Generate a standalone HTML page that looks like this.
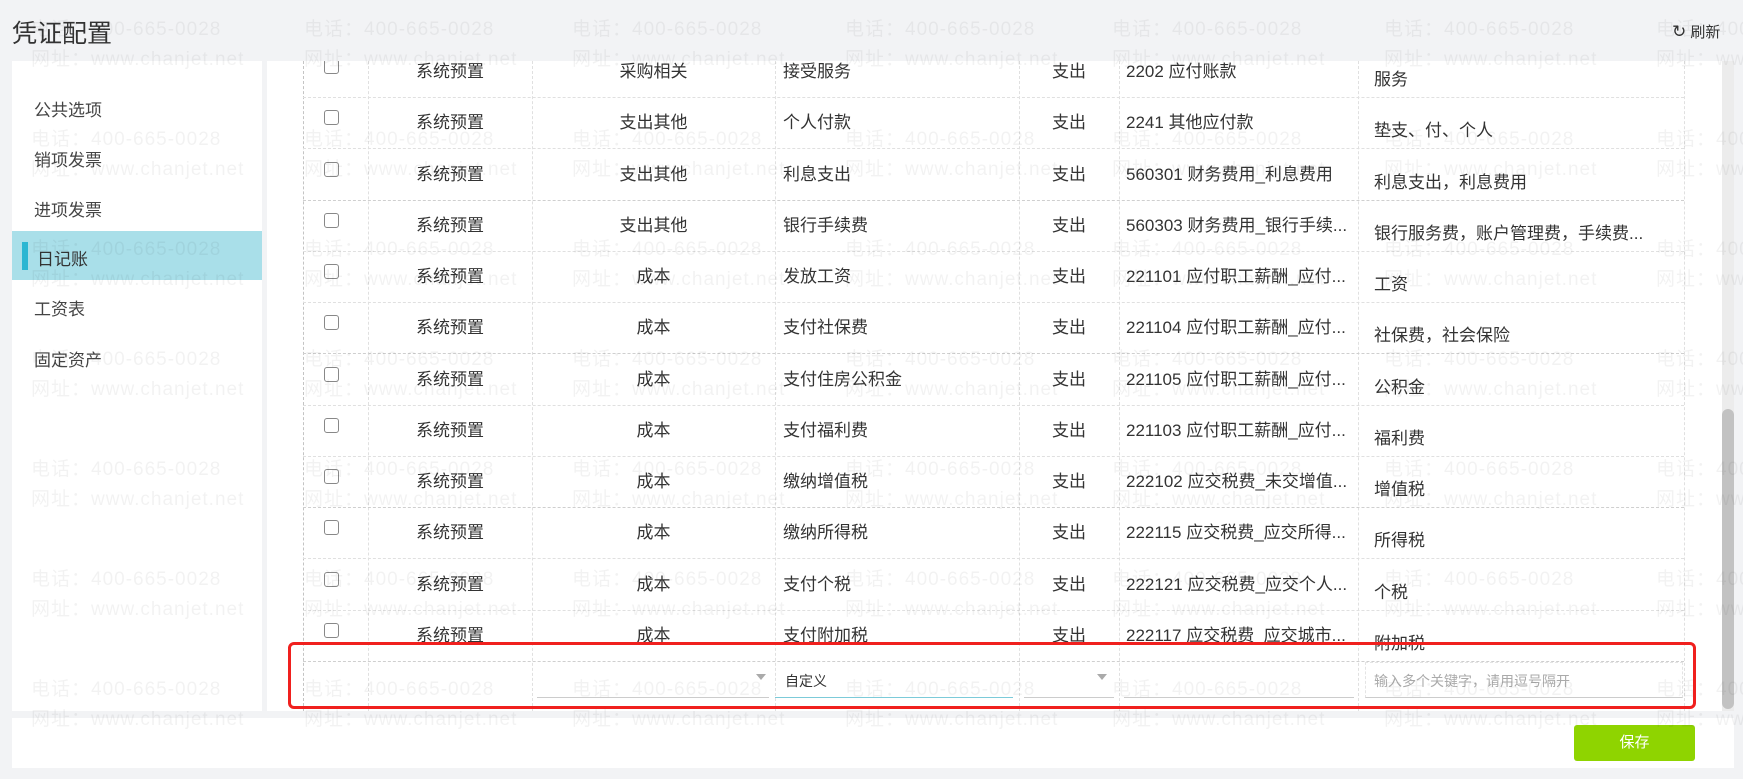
<!DOCTYPE html>
<html><head><meta charset="utf-8"><style>
*{margin:0;padding:0;box-sizing:border-box}
body{width:1743px;height:779px;background:#f2f3f5;position:relative;overflow:hidden;font-family:"Liberation Sans","Noto Sans CJK SC",sans-serif;color:#333}
.abs{position:absolute}
.title{left:12px;top:14px;font-size:25px;color:#333}
.refresh{left:1672px;top:21px;font-size:15px;color:#333}
.side{left:12px;top:61px;width:250px;height:650px;background:#fff}
.side div{position:absolute;left:22px;font-size:17px;color:#444}
.active{left:12px;top:231px;width:250px;height:49px;background:#a9dfe9}
.bar{left:22px;top:242px;width:6px;height:28px;background:#2bb6d2}
.main{left:267px;top:61px;width:1455px;height:650px;background:#fff;overflow:hidden}
.scroll{left:1722px;top:61px;width:12px;height:650px;background:#ececec}
.thumb{left:1722px;top:409px;width:12px;height:300px;background:#c2c2c2;border-radius:6px}
.vl{position:absolute;width:0;border-left:1px dashed #e0e0e0}
.hl{position:absolute;height:0;border-top:1px dashed #e0e0e0}
.cell{position:absolute;font-size:17px;white-space:nowrap}
.cb{position:absolute;width:15px;height:15px;border:1px solid #888;border-radius:3px;background:#fff}
.bottom{left:12px;top:718px;width:1722px;height:50px;background:#fff}
.save{left:1574px;top:725px;width:121px;height:36px;background:#8fd400;border-radius:3px;color:#fff;font-size:15px;text-align:center;line-height:36px}
.red{left:288px;top:642px;width:1408px;height:67px;border:3px solid #f0201e;border-radius:6px}
.wm{position:absolute;font-size:19px;color:rgba(0,0,0,0.05);white-space:nowrap;line-height:30px;pointer-events:none;letter-spacing:1px}
</style></head><body>
<div class="abs title">凭证配置</div>
<div class="abs refresh"><span style="font-size:17px">&#x21bb;</span> 刷新</div>
<div class="abs side">
<div style="top:35px">公共选项</div>
<div style="top:85px">销项发票</div>
<div style="top:135px">进项发票</div>
<div style="top:234px">工资表</div>
<div style="top:285px">固定资产</div>
</div>
<div class="abs active"></div><div class="abs bar"></div>
<div class="abs" style="left:37px;top:245px;font-size:17px;color:#333">日记账</div>
<div class="abs main" id="m"></div>
<div class="abs scroll"></div><div class="abs thumb"></div>
<div class="abs bottom"></div>
<div class="abs save">保存</div>
<div id="wm"></div>
<div class="abs red"></div>
<script>
var m=document.getElementById('m');var h='';
var ox=267,oy=61;
var rows=[["采购相关","接受服务","2202 应付账款","服务"],["支出其他","个人付款","2241 其他应付款","垫支、付、个人"],["支出其他","利息支出","560301 财务费用_利息费用","利息支出，利息费用"],["支出其他","银行手续费","560303 财务费用_银行手续...","银行服务费，账户管理费，手续费..."],["成本","发放工资","221101 应付职工薪酬_应付...","工资"],["成本","支付社保费","221104 应付职工薪酬_应付...","社保费，社会保险"],["成本","支付住房公积金","221105 应付职工薪酬_应付...","公积金"],["成本","支付福利费","221103 应付职工薪酬_应付...","福利费"],["成本","缴纳增值税","222102 应交税费_未交增值...","增值税"],["成本","缴纳所得税","222115 应交税费_应交所得...","所得税"],["成本","支付个税","222121 应交税费_应交个人...","个税"],["成本","支付附加税","222117 应交税费_应交城市...","附加税"]];
var cols=[303,368,532,775,1019,1119,1358,1684];
cols.forEach(function(c,i){h+='<div class="vl" style="left:'+(c-ox)+'px;top:0;height:650px;'+(i==0?'border-left-color:#c4c4c4':'')+'"></div>';});
for(var i=0;i<13;i++){var y=97+51.25*i-oy;h+='<div class="hl" style="left:'+(303-ox)+'px;width:'+(1684-303)+'px;top:'+y+'px;'+(i%3==2?'border-top-color:#cfcfcf':'')+'"></div>';}
h+='<div class="hl" style="left:'+(303-ox)+'px;width:'+(1684-303)+'px;top:'+(708-oy)+'px;border-top-color:#c4c4c4"></div>';
rows.forEach(function(r,i){var cy=68+51.25*i-oy;var t=cy-11;
h+='<div class="cb" style="left:'+(324-ox)+'px;top:'+(cy-9)+'px"></div>';
h+='<div class="cell" style="left:'+(368-ox)+'px;width:164px;text-align:center;top:'+t+'px">系统预置</div>';
h+='<div class="cell" style="left:'+(532-ox)+'px;width:243px;text-align:center;top:'+t+'px">'+r[0]+'</div>';
h+='<div class="cell" style="left:'+(783-ox)+'px;top:'+t+'px">'+r[1]+'</div>';
h+='<div class="cell" style="left:'+(1019-ox)+'px;width:100px;text-align:center;top:'+t+'px">支出</div>';
h+='<div class="cell" style="left:'+(1126-ox)+'px;top:'+t+'px">'+r[2]+'</div>';
h+='<div class="cell" style="left:'+(1374-ox)+'px;top:'+(t+8)+'px">'+r[3]+'</div>';});
h+='<div style="position:absolute;left:'+(537-ox)+'px;top:'+(697-oy)+'px;width:232px;border-top:1px solid #ccc"></div>';
h+='<div style="position:absolute;left:'+(756-ox)+'px;top:'+(674-oy)+'px;border:5px solid transparent;border-top:6px solid #aaa"></div>';
h+='<div class="cell" style="left:'+(785-ox)+'px;top:'+(671-oy)+'px;font-size:14px">自定义</div>';
h+='<div style="position:absolute;left:'+(775-ox)+'px;top:'+(697-oy)+'px;width:238px;border-top:1px solid #7ccbd9"></div>';
h+='<div style="position:absolute;left:'+(1024-ox)+'px;top:'+(697-oy)+'px;width:90px;border-top:1px solid #ccc"></div>';
h+='<div style="position:absolute;left:'+(1097-ox)+'px;top:'+(674-oy)+'px;border:5px solid transparent;border-top:6px solid #aaa"></div>';
h+='<div style="position:absolute;left:'+(1124-ox)+'px;top:'+(697-oy)+'px;width:230px;border-top:1px solid #ccc"></div>';
h+='<div style="position:absolute;left:'+(1365-ox)+'px;top:'+(662-oy)+'px;width:318px;height:36px;border:1px dashed #e4e4e4;border-bottom:1px solid #ccc"></div>';
h+='<div class="cell" style="left:'+(1374-ox)+'px;top:'+(671-oy)+'px;font-size:14px;color:#aaa">输入多个关键字，请用逗号隔开</div>';
m.innerHTML=h;
var w='';var xs=[31,304,572,845,1112,1384,1656];
for(var k=0;k<7;k++){var y=15+110*k;xs.forEach(function(x){w+='<div class="wm" style="left:'+x+'px;top:'+y+'px">电话：400-665-0028<br>网址：www.chanjet.net</div>';});}
document.getElementById('wm').innerHTML=w;
</script>
</body></html>
